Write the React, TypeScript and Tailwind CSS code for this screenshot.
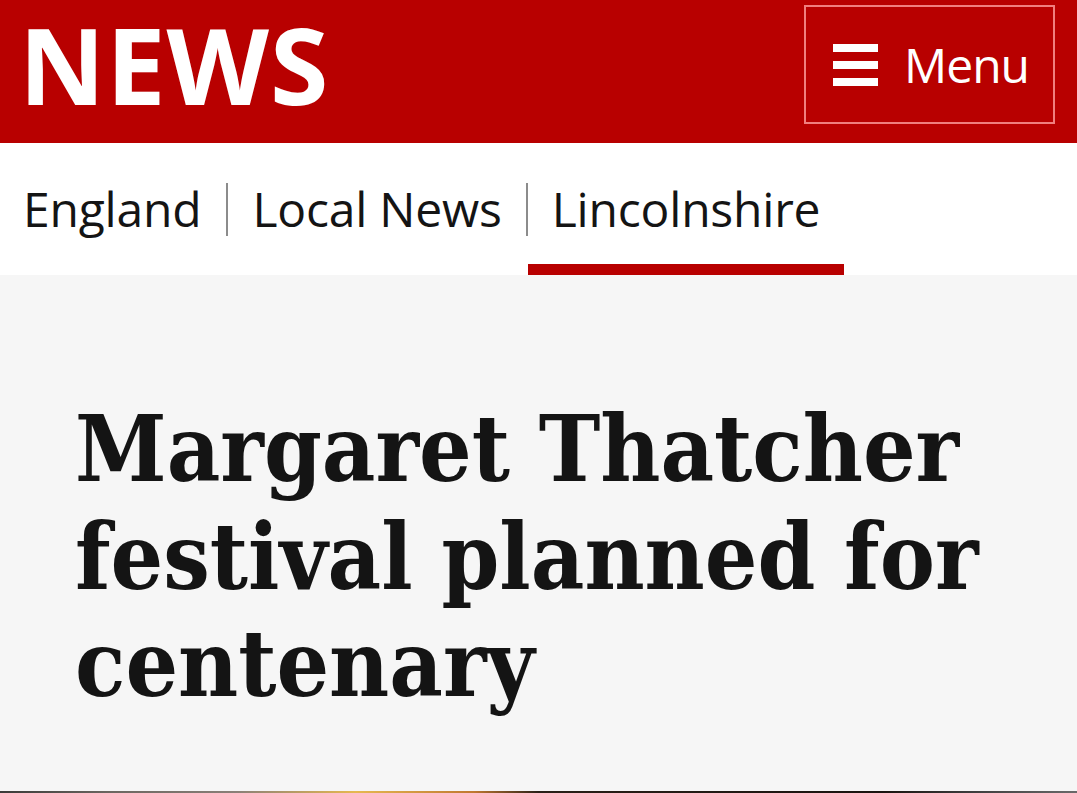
import React from "react";

const sans = "font-['Open_Sans','Noto_Sans',sans-serif]";

function MenuButton() {
  return (
    <button
      type="button"
      className={`mt-[5px] mr-[22px] flex h-[119px] w-[251px] items-center border-2 border-[#f07f7f] pl-[27px] text-white ${sans}`}
    >
      <span className="flex w-[45px] flex-col gap-[9px]">
        <span className="h-[8px] bg-white" />
        <span className="h-[8px] bg-white" />
        <span className="h-[8px] bg-white" />
      </span>
      <span className="ml-[26px] text-[48px] leading-[48px] tracking-[-1px]">Menu</span>
    </button>
  );
}

const crumbs = [
  { label: "England", active: false },
  { label: "Local News", active: false },
  { label: "Lincolnshire", active: true },
];

export default function App() {
  return (
    <div className="min-h-[793px] w-full bg-[#f6f6f6]">
      <header className="flex h-[143px] items-start justify-between bg-[#b80000]">
        <span
          className={`ml-[19px] text-[106px] font-bold leading-[128px] tracking-[1px] text-white ${sans}`}
        >
          NEWS
        </span>
        <MenuButton />
      </header>

      <nav className={`flex h-[132px] items-stretch bg-white pl-[23px] text-[#141414] ${sans}`}>
        {crumbs.map((item, i) => (
          <React.Fragment key={item.label}>
            {i > 0 ? <span className="h-[53px] w-[2px] self-center bg-[#8c8c8c]" /> : null}
            <a
              href="#"
              className={`relative flex items-center text-[48px] leading-[48px] tracking-[-0.2px] ${
                i === 0 ? "pr-[25px]" : "px-[24px]"
              }`}
            >
              {item.label}
              {item.active ? (
                <span className="absolute bottom-0 left-0 right-0 h-[11px] bg-[#b80000]" />
              ) : null}
            </a>
          </React.Fragment>
        ))}
      </nav>

      <section className="h-[516px] bg-[#f6f6f6] pl-[75px] pr-[60px] pt-[121px]">
        <h1 className="font-['DejaVu_Serif_Condensed','Liberation_Serif',serif] text-[92px] font-bold leading-[107.5px] text-[#141414]">
          Margaret Thatcher festival planned for centenary
        </h1>
      </section>

      <div className="h-[40px] bg-[linear-gradient(to_right,#3a3a38_0%,#6b6660_10%,#8a8078_22%,#e6b850_33%,#c07830_44%,#2a2018_50%,#1a1410_82%,#3c3c3c_90%,#6a6a6a_100%)]" />
    </div>
  );
}
